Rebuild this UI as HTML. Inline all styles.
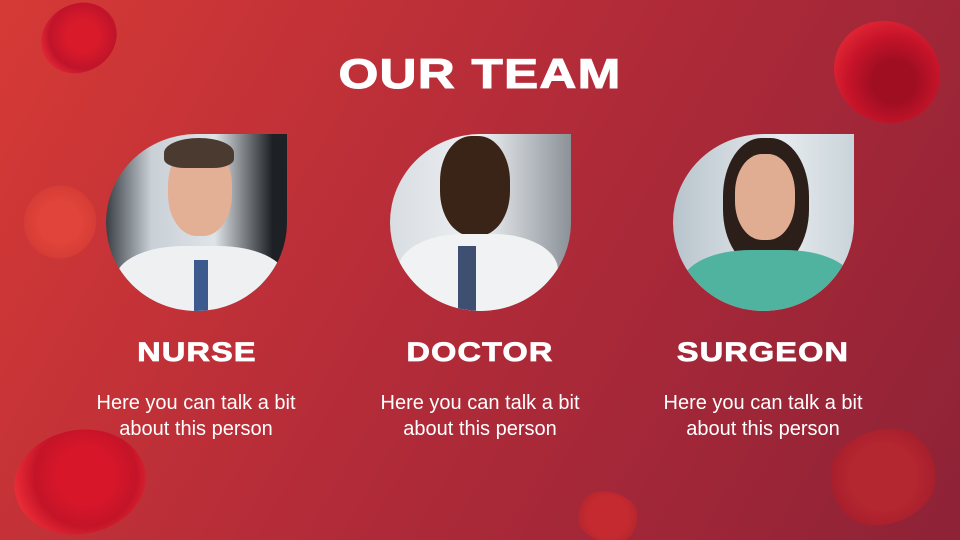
<!DOCTYPE html>
<html><head><meta charset="utf-8"><style>
*{margin:0;padding:0;box-sizing:border-box}
html,body{width:960px;height:540px;overflow:hidden}
body{position:relative;font-family:"Liberation Sans",sans-serif;
background:linear-gradient(120deg,#d63a36 0%,#b52c38 45%,#8e2237 100%);color:#fff}
.cell{position:absolute;border-radius:50%;}
.title{position:absolute;top:50px;left:0;width:960px;text-align:center;font-size:42px;font-weight:900;letter-spacing:1px;transform:scaleX(1.22);transform-origin:center;-webkit-text-stroke:1px #fff}
.photo{position:absolute;top:134px;width:181px;height:177px;border-radius:50% 0 50% 50%;overflow:hidden;background:#ccd3d8}
.name{position:absolute;top:337px;width:300px;text-align:center;font-size:27px;font-weight:bold;letter-spacing:1px;transform:scaleX(1.2);-webkit-text-stroke:0.8px #fff}
.desc{position:absolute;top:390px;width:300px;text-align:center;font-size:20px;line-height:26px}
</style></head><body>
<div class="cell" style="left:40px;top:4px;width:78px;height:68px;transform:rotate(-30deg);background:radial-gradient(circle at 55% 50%,#d81a2a 30%,#c0142a 60%,#e42a36 80%,rgba(0,0,0,0) 82%)"></div>
<div class="cell" style="left:833px;top:22px;width:108px;height:100px;transform:rotate(30deg);background:radial-gradient(circle at 60% 55%,#a00e22 25%,#c8142a 55%,#e02634 78%,rgba(0,0,0,0) 80%)"></div>
<div class="cell" style="left:24px;top:185px;width:72px;height:74px;transform:rotate(30deg);background:radial-gradient(circle,#e0443a 40%,#d63c36 70%,rgba(0,0,0,0) 72%)"></div>
<div class="cell" style="left:14px;top:430px;width:132px;height:104px;transform:rotate(-10deg);background:radial-gradient(circle at 55% 45%,#d8162a 30%,#c41428 55%,#ea2c36 78%,rgba(0,0,0,0) 80%)"></div>
<div class="cell" style="left:575px;top:492px;width:66px;height:50px;transform:rotate(15deg);background:radial-gradient(circle,#c42a30 50%,#b8262e 70%,rgba(0,0,0,0) 72%)"></div>
<div class="cell" style="left:826px;top:430px;width:114px;height:94px;transform:rotate(-20deg);background:radial-gradient(circle,#b42630 45%,#a81f2c 70%,rgba(0,0,0,0) 72%)"></div>

<div class="title">OUR TEAM</div>

<div class="photo" style="left:106px;background:linear-gradient(90deg,#3a3f46 0,#c9d0d6 25%,#dfe4e8 60%,#1d2024 92%)">
 <div style="position:absolute;left:62px;top:10px;width:64px;height:92px;border-radius:45%;background:#e3b096"></div>
 <div style="position:absolute;left:58px;top:4px;width:70px;height:30px;border-radius:50% 50% 30% 30%;background:#4a3a30"></div>
 <div style="position:absolute;left:10px;top:112px;width:170px;height:80px;border-radius:40% 40% 0 0;background:#eef0f2"></div>
 <div style="position:absolute;left:88px;top:126px;width:14px;height:52px;background:#3d5a8e"></div>
</div>
<div class="photo" style="left:390px;background:linear-gradient(90deg,#d8dde2 0,#eef1f3 50%,#8a9198 100%)">
 <div style="position:absolute;left:50px;top:2px;width:70px;height:100px;border-radius:45%;background:#3a2418"></div>
 <div style="position:absolute;left:8px;top:100px;width:160px;height:90px;border-radius:40% 40% 0 0;background:#f1f2f4"></div>
 <div style="position:absolute;left:68px;top:112px;width:18px;height:66px;background:#3e4f72"></div>
</div>
<div class="photo" style="left:673px;background:linear-gradient(90deg,#b8c4cc 0,#e6ebee 60%,#c9d4da 100%)">
 <div style="position:absolute;left:50px;top:4px;width:86px;height:130px;border-radius:45%;background:#2c1e18"></div>
 <div style="position:absolute;left:62px;top:20px;width:60px;height:86px;border-radius:45%;background:#e0ad92"></div>
 <div style="position:absolute;left:10px;top:116px;width:170px;height:80px;border-radius:40% 40% 0 0;background:#4fb3a0"></div>
</div>

<div class="name" style="left:47px">NURSE</div>
<div class="name" style="left:330px">DOCTOR</div>
<div class="name" style="left:613px">SURGEON</div>
<div class="desc" style="left:46px">Here you can talk a bit<br>about this person</div>
<div class="desc" style="left:330px">Here you can talk a bit<br>about this person</div>
<div class="desc" style="left:613px">Here you can talk a bit<br>about this person</div>
</body></html>
